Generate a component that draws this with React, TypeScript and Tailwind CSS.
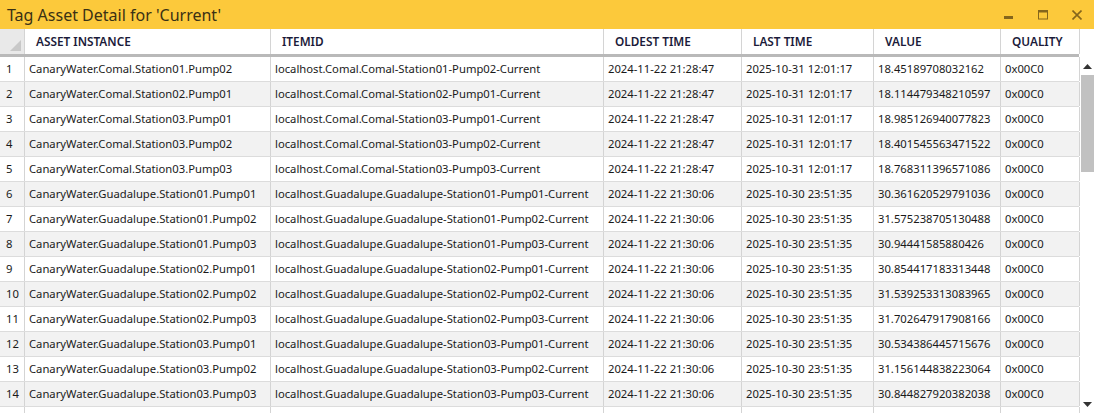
import React from "react";

type Row = {
  asset: string;
  item: string;
  oldest: string;
  last: string;
  value: string;
};

const COMAL_T = ["2024-11-22 21:28:47", "2025-10-31 12:01:17"];
const GUAD_T = ["2024-11-22 21:30:06", "2025-10-30 23:51:35"];

function mk(site: string, st: string, pump: string, t: string[], value: string): Row {
  return {
    asset: `CanaryWater.${site}.Station${st}.Pump${pump}`,
    item: `localhost.${site}.${site}-Station${st}-Pump${pump}-Current`,
    oldest: t[0],
    last: t[1],
    value,
  };
}

const rows: Row[] = [
  mk("Comal", "01", "02", COMAL_T, "18.45189708032162"),
  mk("Comal", "02", "01", COMAL_T, "18.114479348210597"),
  mk("Comal", "03", "01", COMAL_T, "18.985126940077823"),
  mk("Comal", "03", "02", COMAL_T, "18.401545563471522"),
  mk("Comal", "03", "03", COMAL_T, "18.768311396571086"),
  mk("Guadalupe", "01", "01", GUAD_T, "30.361620529791036"),
  mk("Guadalupe", "01", "02", GUAD_T, "31.575238705130488"),
  mk("Guadalupe", "01", "03", GUAD_T, "30.94441585880426"),
  mk("Guadalupe", "02", "01", GUAD_T, "30.854417183313448"),
  mk("Guadalupe", "02", "02", GUAD_T, "31.539253313083965"),
  mk("Guadalupe", "02", "03", GUAD_T, "31.702647917908166"),
  mk("Guadalupe", "03", "01", GUAD_T, "30.534386445715676"),
  mk("Guadalupe", "03", "02", GUAD_T, "31.156144838223064"),
  mk("Guadalupe", "03", "03", GUAD_T, "30.844827920382038"),
];

const COLS = [
  { label: "ASSET INSTANCE", w: "w-[246px]" },
  { label: "ITEMID", w: "w-[333px]" },
  { label: "OLDEST TIME", w: "w-[138px]" },
  { label: "LAST TIME", w: "w-[132px]" },
  { label: "VALUE", w: "w-[127px]" },
  { label: "QUALITY", w: "w-[79px]" },
];

const FONT = { fontFamily: '"Segoe UI", "Noto Sans", sans-serif' };

function Cell({ w, children }: { w: string; children?: React.ReactNode }) {
  return (
    <div className={`${w} shrink-0 overflow-hidden whitespace-nowrap border-r border-[#d4d4d4] pl-[4px] leading-[24px]`}>
      {children}
    </div>
  );
}

export default function App() {
  return (
    <div className="flex h-[413px] w-[1094px] flex-col overflow-hidden bg-white" style={FONT}>
      <div className="flex h-[29px] shrink-0 items-center justify-between bg-[#fcc93b] pl-[7px]">
        <span className="text-[16px] leading-none text-[#3a3114]">Tag Asset Detail for 'Current'</span>
        <div className="flex items-center gap-[24px] pr-[12px] text-[#85661c]">
          <svg width="10" height="10" viewBox="0 0 10 10">
            <rect x="0" y="6" width="9" height="3" fill="currentColor" />
          </svg>
          <svg width="10" height="10" viewBox="0 0 10 10">
            <rect x="0.5" y="0.5" width="9" height="8.5" fill="none" stroke="currentColor" />
            <rect x="0" y="0" width="10" height="2.5" fill="currentColor" />
          </svg>
          <svg width="10" height="10" viewBox="0 0 10 10">
            <path d="M0.5 0.5 L9.5 9.5 M9.5 0.5 L0.5 9.5" stroke="currentColor" strokeWidth="1.6" />
          </svg>
        </div>
      </div>

      <div className="flex min-h-0 flex-1">
        <div className="flex w-[1079px] shrink-0 flex-col text-[11.25px] text-[#1a1a1a]">
          <div className="flex h-[28px] shrink-0 border-b-[3px] border-[#b9b9b9]">
            <div className="relative w-[25px] shrink-0 border-r border-[#d4d4d4] bg-[#e9e9e9]">
              <div className="absolute bottom-[3px] right-[3px] h-0 w-0 border-b-[11px] border-l-[11px] border-b-[#c8c8c8] border-l-transparent" />
            </div>
            {COLS.map((c) => (
              <div
                key={c.label}
                className={`${c.w} shrink-0 border-r border-[#d4d4d4] pl-[11px] text-[11.8px] font-semibold leading-[25px] text-[#1b1b3a]`}
              >
                {c.label}
              </div>
            ))}
          </div>
          {rows.map((r, i) => (
            <div
              key={i}
              className={`flex h-[25px] shrink-0 border-b border-[#dcdcdc] ${i % 2 === 1 ? "bg-[#f2f2f2]" : "bg-white"}`}
            >
              <div className="w-[25px] shrink-0 border-r border-[#d4d4d4] pl-[6px] leading-[24px]">{i + 1}</div>
              <Cell w={COLS[0].w}>{r.asset}</Cell>
              <Cell w={COLS[1].w}>{r.item}</Cell>
              <Cell w={COLS[2].w}>{r.oldest}</Cell>
              <Cell w={COLS[3].w}>{r.last}</Cell>
              <Cell w={COLS[4].w}>{r.value}</Cell>
              <Cell w={COLS[5].w}>0x00C0</Cell>
            </div>
          ))}
          <div className="flex flex-1">
            <div className="w-[25px] shrink-0 border-r border-[#d4d4d4]" />
            {COLS.map((c) => (
              <div key={c.label} className={`${c.w} shrink-0 border-r border-[#d4d4d4]`} />
            ))}
          </div>
        </div>

        <div className="flex w-[15px] shrink-0 flex-col items-end pt-[28px]">
          <div className="flex w-[13px] flex-1 flex-col bg-white">
            <div className="flex h-[18px] items-center justify-center">
              <svg width="9" height="5" viewBox="0 0 9 5">
                <path d="M0 5 L4.5 0 L9 5 Z" fill="#333" />
              </svg>
            </div>
            <div className="h-[97px] bg-[#c1c1c1]" />
            <div className="flex-1" />
            <div className="flex h-[18px] items-center justify-center">
              <svg width="9" height="5" viewBox="0 0 9 5">
                <path d="M0 0 L9 0 L4.5 5 Z" fill="#333" />
              </svg>
            </div>
          </div>
        </div>
      </div>
    </div>
  );
}
